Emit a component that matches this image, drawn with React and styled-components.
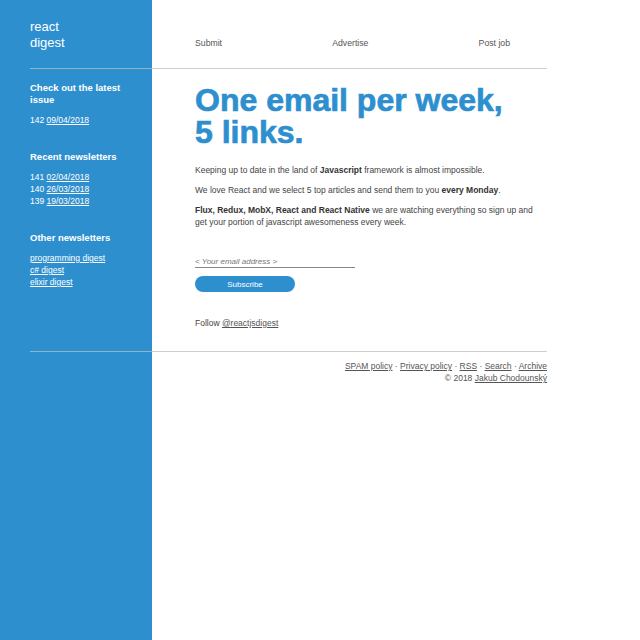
import styled, { createGlobalStyle } from "styled-components";

const BLUE = "#2e8fcf";

const GlobalStyle = createGlobalStyle`
  html, body {
    margin: 0;
    min-height: 100%;
  }
  body {
    min-height: 640px;
    background: linear-gradient(to right, ${BLUE} 152px, #fff 152px);
    font-family: "Liberation Sans", Arial, sans-serif;
    color: #444;
  }
`;

const Page = styled.div`
  display: grid;
  grid-template-columns: 122px 352px;
  column-gap: 43px;
  padding-left: 30px;
  width: 517px;
`;

const Logo = styled.div`
  padding: 19px 0 17px;
  color: #fff;
  font-size: 13px;
  line-height: 16px;
`;

const Nav = styled.nav`
  display: flex;
  justify-content: space-between;
  align-items: flex-end;
  padding: 19px 37px 17px 0;
  font-size: 8.7px;
  line-height: 16px;
  color: #555;
`;

const Divider = styled.div`
  grid-column: 1 / -1;
  height: 1px;
  background: rgba(190, 190, 190, 0.75);
`;

const Sidebar = styled.aside`
  padding-top: 13px;
  padding-right: 12px;
  color: #fff;
  font-size: 8.5px;
  line-height: 12px;
`;

const Section = styled.section`
  margin-bottom: 25px;
`;

const SideTitle = styled.h3`
  margin: 0 0 8px;
  font-size: 9.5px;
  line-height: 12px;
  font-weight: bold;
`;

const SideLink = styled.a`
  color: #fff;
  text-decoration: underline;
`;

const Main = styled.main`
  padding-top: 15px;
  padding-bottom: 22px;
`;

const Headline = styled.h1`
  margin: 0 0 16px;
  font-size: 32px;
  line-height: 32px;
  font-weight: bold;
  color: ${BLUE};
  -webkit-text-stroke: 0.7px ${BLUE};
`;

const Text = styled.p`
  max-width: 340px;
  margin: 0 0 8px;
  font-size: 8.5px;
  line-height: 12px;
  color: #444;
  & b {
    color: #333;
  }
`;

const EmailInput = styled.input`
  display: block;
  margin-top: 27px;
  width: 160px;
  height: 12px;
  padding: 0;
  border: none;
  border-bottom: 1px solid #888;
  font-family: inherit;
  font-size: 8px;
  outline: none;
  &::placeholder {
    color: #777;
    font-style: italic;
  }
`;

const Button = styled.button`
  display: block;
  margin-top: 8px;
  width: 100px;
  height: 16px;
  border: none;
  border-radius: 8px;
  background: ${BLUE};
  color: #fff;
  font-family: inherit;
  font-size: 8px;
`;

const Follow = styled.div`
  margin-top: 25px;
  font-size: 8.5px;
  line-height: 12px;
  color: #444;
`;

const GrayLink = styled.a`
  color: #555;
  text-decoration: underline;
`;

const Footer = styled.footer`
  grid-column: 2;
  padding-top: 8px;
  text-align: right;
  font-size: 8.5px;
  line-height: 12px;
  color: #555;
`;

const newsletters = [
  ["141", "02/04/2018"],
  ["140", "26/03/2018"],
  ["139", "19/03/2018"],
];

const others = ["programming digest", "c# digest", "elixir digest"];

const footerLinks = ["SPAM policy", "Privacy policy", "RSS", "Search", "Archive"];

export default function App() {
  return (
    <>
      <GlobalStyle />
      <Page>
        <Logo>
          react
          <br />
          digest
        </Logo>
        <Nav>
          <span>Submit</span>
          <span>Advertise</span>
          <span>Post job</span>
        </Nav>
        <Divider />
        <Sidebar>
          <Section>
            <SideTitle>Check out the latest issue</SideTitle>
            <div>
              142 <SideLink>09/04/2018</SideLink>
            </div>
          </Section>
          <Section>
            <SideTitle>Recent newsletters</SideTitle>
            {newsletters.map(([num, date]) => (
              <div key={num}>
                {num} <SideLink>{date}</SideLink>
              </div>
            ))}
          </Section>
          <Section>
            <SideTitle>Other newsletters</SideTitle>
            {others.map((name) => (
              <div key={name}>
                <SideLink>{name}</SideLink>
              </div>
            ))}
          </Section>
        </Sidebar>
        <Main>
          <Headline>
            One email per week,
            <br />5 links.
          </Headline>
          <Text>
            Keeping up to date in the land of <b>Javascript</b> framework is
            almost impossible.
          </Text>
          <Text>
            We love React and we select 5 top articles and send them to you{" "}
            <b>every Monday</b>.
          </Text>
          <Text>
            <b>Flux, Redux, MobX, React and React Native</b> we are watching
            everything so sign up and get your portion of javascript
            awesomeness every week.
          </Text>
          <EmailInput placeholder="< Your email address >" />
          <Button>Subscribe</Button>
          <Follow>
            Follow <GrayLink>@reactjsdigest</GrayLink>
          </Follow>
        </Main>
        <Divider />
        <Footer>
          {footerLinks.map((l, i) => (
            <span key={l}>
              {i > 0 && " · "}
              <GrayLink>{l}</GrayLink>
            </span>
          ))}
          <br />© 2018 <GrayLink>Jakub Chodounský</GrayLink>
        </Footer>
      </Page>
    </>
  );
}
